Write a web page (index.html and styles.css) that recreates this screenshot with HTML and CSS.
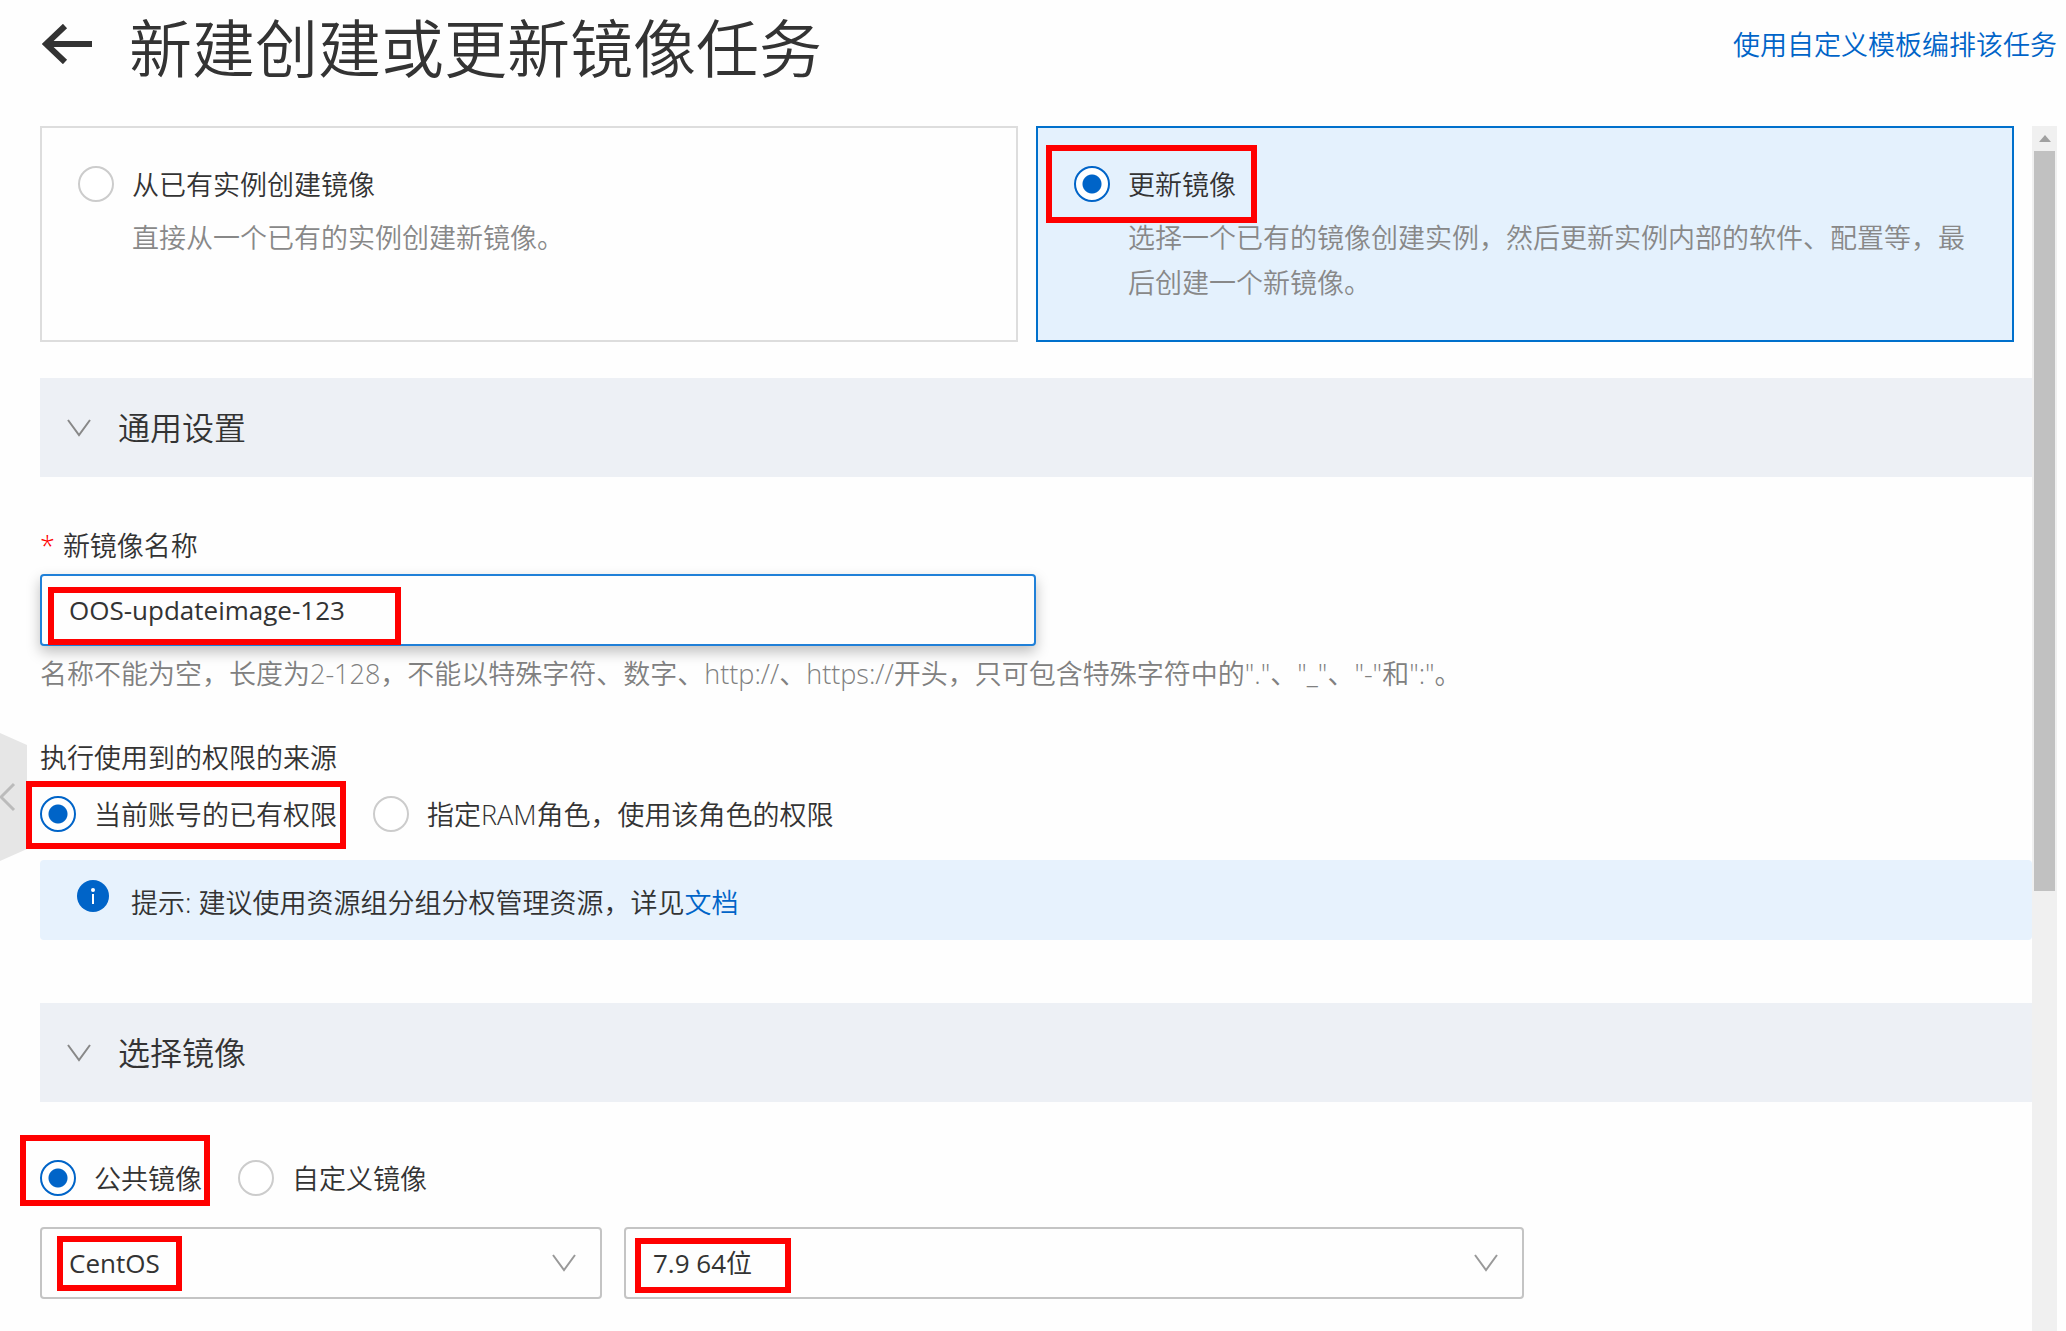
FILE: index.html
```html
<!DOCTYPE html>
<html lang="zh-CN">
<head>
  <meta charset="UTF-8">
  <meta name="viewport" content="width=device-width, initial-scale=1.0">
  <title>新建创建或更新镜像任务</title>
  <link rel="stylesheet" href="styles.css">
</head>
<body>
  <header class="header">
    <button type="button" class="back" aria-label="返回">
      <svg width="50" height="40" viewBox="0 0 50 40" fill="none" stroke="#333" stroke-width="6">
        <path d="M4 20H50M23 2L4 20L23 38"/>
      </svg>
    </button>
    <h1>新建创建或更新镜像任务</h1>
    <a href="#" class="template-link">使用自定义模板编排该任务</a>
  </header>

  <div class="layout">
    <form class="content">
      <div class="cards">
        <div class="card">
          <label class="radio">
            <input type="radio" name="task">
            <span>从已有实例创建镜像</span>
          </label>
          <p>直接从一个已有的实例创建新镜像。</p>
        </div>
        <div class="card selected">
          <label class="radio">
            <input type="radio" name="task" checked>
            <span>更新镜像</span>
            <i class="mark mark-task"></i>
          </label>
          <p>选择一个已有的镜像创建实例，然后更新实例内部的软件、配置等，最后创建一个新镜像。</p>
        </div>
      </div>

      <h2 class="section">
        <svg width="24" height="18" viewBox="0 0 24 18" fill="none" stroke="#888" stroke-width="2">
          <path d="M1 1L12 16L23 1"/>
        </svg>
        通用设置
      </h2>
      <div class="general">
        <label class="field-label" for="image-name"><span class="required">*</span>新镜像名称</label>
        <div class="name-box">
          <input type="text" id="image-name" value="OOS-updateimage-123">
          <i class="mark mark-name"></i>
        </div>
        <p class="hint">名称不能为空，长度为2-128，不能以特殊字符、数字、http://、https://开头，只可包含特殊字符中的"."、"_"、"-"和":"。</p>

        <fieldset class="permission">
          <legend>执行使用到的权限的来源</legend>
          <div class="radios">
            <label class="radio">
              <input type="radio" name="permission" checked>
              <span>当前账号的已有权限</span>
              <i class="mark mark-permission"></i>
            </label>
            <label class="radio">
              <input type="radio" name="permission">
              <span>指定RAM角色，使用该角色的权限</span>
            </label>
          </div>
        </fieldset>

        <div class="notice">
          <svg width="32" height="32" viewBox="0 0 32 32">
            <circle cx="16" cy="16" r="16" fill="#0064c8"/>
            <circle cx="16" cy="10" r="2" fill="#fff"/>
            <path d="M16 14V24" stroke="#fff" stroke-width="2"/>
          </svg>
          <p>提示: 建议使用资源组分组分权管理资源，详见<a href="#">文档</a></p>
        </div>
      </div>

      <h2 class="section">
        <svg width="24" height="18" viewBox="0 0 24 18" fill="none" stroke="#888" stroke-width="2">
          <path d="M1 1L12 16L23 1"/>
        </svg>
        选择镜像
      </h2>
      <div class="image">
        <div class="radios">
          <label class="radio">
            <input type="radio" name="image" checked>
            <span>公共镜像</span>
            <i class="mark mark-image"></i>
          </label>
          <label class="radio">
            <input type="radio" name="image">
            <span>自定义镜像</span>
          </label>
        </div>
        <div class="selects">
          <div class="select-box">
            <select aria-label="操作系统">
              <option>CentOS</option>
            </select>
            <svg class="arrow" width="24" height="18" viewBox="0 0 24 18" fill="none" stroke="#999" stroke-width="2">
              <path d="M1 1L12 16L23 1"/>
            </svg>
            <i class="mark mark-os"></i>
          </div>
          <div class="select-box">
            <select aria-label="版本">
              <option>7.9 64位</option>
            </select>
            <svg class="arrow" width="24" height="18" viewBox="0 0 24 18" fill="none" stroke="#999" stroke-width="2">
              <path d="M1 1L12 16L23 1"/>
            </svg>
            <i class="mark mark-version"></i>
          </div>
        </div>
      </div>
    </form>

    <div class="scrollbar">
      <svg width="12" height="7" viewBox="0 0 12 7"><path d="M0 7L6 0L12 7Z" fill="#a0a0a0"/></svg>
      <div class="thumb"></div>
    </div>
  </div>

  <button type="button" class="collapse" aria-label="收起">
    <svg width="27" height="128" viewBox="0 0 27 128" fill="none">
      <path d="M0 0L27 12V116L0 128Z" fill="#e6e6e6"/>
      <path d="M14 51L1 64L14 77" stroke="#bbb" stroke-width="3"/>
    </svg>
  </button>
</body>
</html>
```

FILE: styles.css
```css
* {
  box-sizing: border-box;
}
body {
  margin: 0;
  min-height: 100vh;
  display: flex;
  flex-direction: column;
  position: relative;
  background-color: #fefefe;
  color: #333;
  font-family: "Open Sans", "Noto Sans CJK SC", sans-serif;
  font-size: 27px;
  font-weight: 350;
  line-height: 45px;
}
h1, h2, p {
  margin: 0;
  font-weight: inherit;
}
a {
  color: #0064c8;
  text-decoration: none;
}
button {
  padding: 0;
  border: none;
  background: none;
  cursor: pointer;
}
svg {
  display: block;
  flex-shrink: 0;
}
.header {
  display: flex;
  align-items: center;
  height: 88px;
  margin-bottom: 38px;
  padding: 0 9px 0 42px;
}
.header h1 {
  margin-left: 37px;
  padding-top: 8px;
  font-size: 63px;
  line-height: 80px;
}
.template-link {
  margin-left: auto;
}
.layout {
  flex: 1;
  display: flex;
  padding: 0 9px 0 40px;
}
.content {
  flex: 1;
  min-width: 0;
}

/* task type cards */
.cards {
  display: grid;
  grid-template-columns: 1fr 1fr;
  gap: 18px;
  margin-right: 18px;
}
.card {
  padding: 38px 36px;
  border: 2px solid #ddd;
}
.card.selected {
  border-color: #0070cc;
  background-color: #e4f1fd;
}
.card p {
  margin: 13px 0 -3px 54px;
  color: #888;
}
.radio {
  position: relative;
  display: flex;
  align-items: center;
  gap: 18px;
  width: fit-content;
  height: 36px;
}
.radio input {
  appearance: none;
  width: 36px;
  height: 36px;
  margin: 0;
  border: 2px solid #ccc;
  border-radius: 50%;
  background-color: #fff;
}
.radio input:checked {
  border-color: #0064c8;
  background-image: radial-gradient(circle, #0064c8 9px, #fff 10px);
}
.radios {
  display: flex;
  gap: 36px;
}

.section {
  display: flex;
  align-items: center;
  gap: 27px;
  height: 99px;
  margin-top: 36px;
  padding-left: 27px;
  background-color: #edf0f5;
  font-size: 32px;
}
.general {
  padding: 46px 0 27px;
}
.field-label {
  display: block;
  margin-bottom: 6px;
}
.required {
  margin-right: 8px;
  color: #f00;
}
.name-box {
  position: relative;
  width: 50%;
}
.name-box input {
  display: block;
  width: 100%;
  height: 72px;
  padding: 0 27px;
  border: 2px solid #2080d8;
  border-radius: 4px;
  outline: none;
  background-color: #fefefe;
  box-shadow: 0 6px 14px rgba(0, 0, 0, 0.25);
  color: #333;
  font-family: inherit;
  font-size: 26px;
}
.hint {
  position: relative;
  margin-top: 5px;
  color: #808080;
}
.permission {
  margin: 39px 0 28px;
  padding: 0;
  border: none;
}
.permission legend {
  padding: 0;
  margin-bottom: 16px;
}
.notice {
  display: flex;
  gap: 22px;
  padding: 20px 37px 15px;
  border-radius: 4px;
  background-color: #e7f2fd;
}

.image {
  padding: 58px 0 32px;
}
.selects {
  display: grid;
  grid-template-columns: 562fr 900fr;
  gap: 22px;
  width: 1484px;
  max-width: 100%;
  margin-top: 31px;
}
.select-box {
  position: relative;
}
.select-box select {
  appearance: none;
  display: block;
  width: 100%;
  height: 72px;
  padding: 0 27px;
  border: 2px solid #c4c4c4;
  border-radius: 4px;
  background-color: #fefefe;
  color: #333;
  font-family: inherit;
  font-size: 26px;
}
.arrow {
  position: absolute;
  top: 27px;
  right: 26px;
  pointer-events: none;
}

/* red highlight frames */
.mark {
  position: absolute;
  border: 6px solid #f00;
  pointer-events: none;
}
.mark-task {
  inset: -21px -21px -21px -28px;
}
.mark-name {
  top: 13px;
  left: 8px;
  width: 353px;
  height: 58px;
}
.mark-permission {
  inset: -15px -9px -17px -14px;
}
.mark-image {
  inset: -25px -8px -10px -20px;
}
.mark-os {
  top: 9px;
  left: 17px;
  width: 125px;
  height: 55px;
}
.mark-version {
  top: 11px;
  left: 11px;
  width: 156px;
  height: 55px;
}

.scrollbar {
  width: 25px;
  padding-top: 9px;
  background-color: #f0f0f0;
}
.scrollbar svg {
  margin: 0 auto 9px;
}
.thumb {
  height: 740px;
  margin: 0 2px;
  background-color: #c1c1c1;
}
.collapse {
  position: absolute;
  top: 733px;
  left: 0;
  z-index: -1;
}
```
